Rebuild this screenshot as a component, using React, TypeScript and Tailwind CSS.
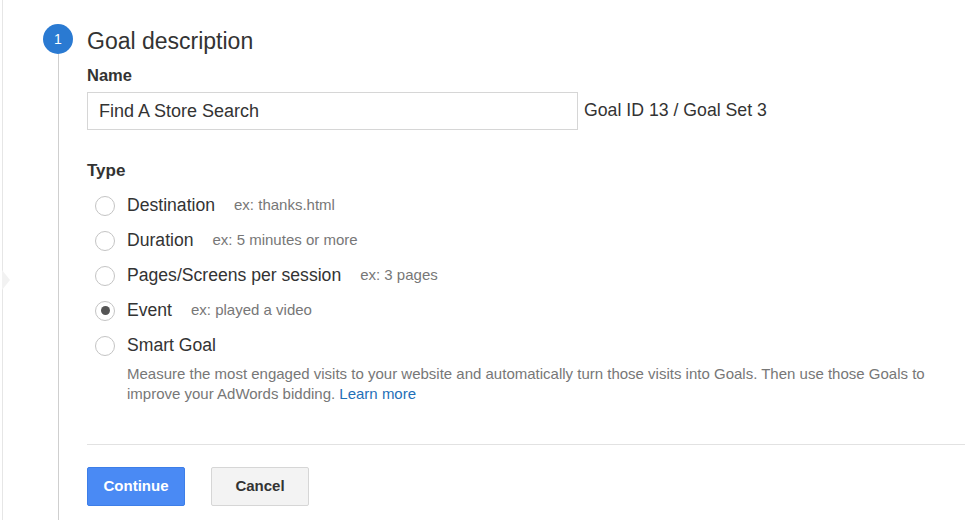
import React from "react";

type GoalType = {
  label: string;
  hint: string;
  checked?: boolean;
};

const types: GoalType[] = [
  { label: "Destination", hint: "ex: thanks.html" },
  { label: "Duration", hint: "ex: 5 minutes or more" },
  { label: "Pages/Screens per session", hint: "ex: 3 pages" },
  { label: "Event", hint: "ex: played a video", checked: true },
  { label: "Smart Goal", hint: "" },
];

function Radio({ checked }: { checked?: boolean }) {
  return (
    <span className="w-[20px] h-[20px] rounded-full border border-[#c4c4c4] bg-white flex items-center justify-center shrink-0">
      {checked && <span className="w-[9px] h-[9px] rounded-full bg-[#555]" />}
    </span>
  );
}

export default function App() {
  return (
    <div
      className="w-[965px] h-[520px] overflow-hidden bg-white flex text-[#333]"
      style={{ fontFamily: '"Liberation Sans", Arial, sans-serif' }}
    >
      {/* left edge of the previous panel */}
      <div className="w-[3px] h-full border-r border-[#e6e6e6] relative shrink-0">
        <span className="absolute left-[2px] top-[270px] w-0 h-0 border-y-[10px] border-y-transparent border-l-[8px] border-l-[#f2f2f2]" />
      </div>

      {/* step timeline */}
      <div className="pl-[40px] pr-[14px] flex flex-col items-center shrink-0">
        <div className="mt-[24px] w-[30px] h-[30px] rounded-full bg-[#2a7ad2] text-white text-[14px] flex items-center justify-center">
          1
        </div>
        <div className="flex-1 w-px bg-[#cfcfcf]" />
      </div>

      {/* content */}
      <div className="flex-1 pt-[27px]">
        <h1 className="text-[23px] leading-[28px] text-[#333]">Goal description</h1>

        <div className="mt-[10px] text-[16.5px] leading-[20px] font-bold">Name</div>
        <div className="mt-[7px] flex items-center">
          <div className="w-[491px] h-[38px] border border-[#d6d6d6] px-[11px] flex items-center text-[18px]">
            Find A Store Search
          </div>
          <span className="ml-[6px] text-[17.7px] -mt-[2px]">Goal ID 13 / Goal Set 3</span>
        </div>

        <div className="mt-[31px] text-[17px] leading-[20px] font-bold">Type</div>
        <div className="mt-[7px] pl-[8px] flex flex-col">
          {types.map((t) => (
            <div key={t.label} className="h-[35px] flex items-center">
              <Radio checked={t.checked} />
              <span className="ml-[12px] text-[17.6px]">{t.label}</span>
              {t.hint && (
                <span className="ml-[19px] text-[15px] text-[#777]">{t.hint}</span>
              )}
            </div>
          ))}
          <p className="ml-[32px] w-[815px] text-[15px] leading-[20px] text-[#777] mt-[1px]">
            Measure the most engaged visits to your website and automatically turn those visits into
            Goals. Then use those Goals to improve your AdWords bidding.{" "}
            <a className="text-[#1f6fb8]">Learn more</a>
          </p>
        </div>

        <div className="mt-[40px] border-t border-[#e2e2e2]" />

        <div className="mt-[22px] flex gap-[26px]">
          <button className="w-[98px] h-[39px] rounded-[2px] bg-[#4a8af4] border border-[#3d7ee8] text-white text-[15px] font-bold">
            Continue
          </button>
          <button className="w-[98px] h-[39px] rounded-[2px] bg-[#f3f3f3] border border-[#d6d6d6] text-[#333] text-[15px] font-bold">
            Cancel
          </button>
        </div>
      </div>
    </div>
  );
}
